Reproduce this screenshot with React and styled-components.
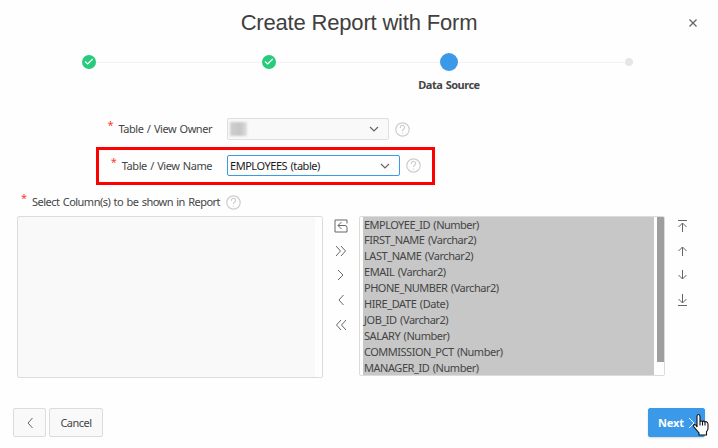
import React from "react";
import styled, { createGlobalStyle } from "styled-components";

const Global = createGlobalStyle`
  * { box-sizing: border-box; }
  body { margin: 0; background: #fefefe; }
  svg { display: block; flex: none; }
`;

const Dialog = styled.main`
  width: 718px;
  height: 448px;
  overflow: hidden;
  display: flex;
  flex-direction: column;
  background: #fefefe;
  color: #454545;
  font: 11px/16px "Noto Sans", "Open Sans", sans-serif;
  word-spacing: 1px;
`;

const Header = styled.header`
  height: 46px;
  flex: none;
  display: grid;
  grid-template-columns: 50px 1fr 50px;
  align-items: center;
`;

const Title = styled.h1`
  grid-column: 2;
  margin: 0;
  text-align: center;
  color: #404040;
  font: 400 22px/26px "Liberation Sans", Arial, sans-serif;
  letter-spacing: -0.18px;
  word-spacing: 0;
`;

const Close = styled.button`
  border: 0;
  padding: 0;
  background: none;
  justify-self: center;
`;

const Steps = styled.ol`
  list-style: none;
  margin: 0 -1px;
  padding: 0;
  height: 68px;
  flex: none;
  display: grid;
  grid-template-columns: repeat(4, 180px);
`;

const Step = styled.li`
  display: flex;
  flex-direction: column;
  align-items: center;
`;

const Track = styled.div`
  width: 180px;
  height: 32px;
  display: flex;
  align-items: center;
`;

const Line = styled.span`
  flex: 1;
  height: 1px;
  background: ${(p) => (p.$hidden ? "transparent" : "#f3f3f3")};
`;

const Dot = styled.span`
  width: ${(p) => p.$size}px;
  height: ${(p) => p.$size}px;
  border-radius: 50%;
  background: ${(p) => p.$color};
  display: grid;
  place-items: center;
`;

const StepLabel = styled.b`
  font-size: 11px;
  line-height: 14px;
  letter-spacing: -0.5px;
`;

const Field = styled.div`
  display: flex;
  align-items: center;
  flex: none;
  width: 339px;
  height: 38px;
  padding-bottom: ${(p) => (p.$highlight ? 1 : 0)}px;
  margin: ${(p) => p.$margin};
  border: 3px solid ${(p) => (p.$highlight ? "#fe0000" : "transparent")};
`;

const Label = styled.label`
  width: ${(p) => p.$width};
  display: flex;
  justify-content: flex-end;
  align-items: flex-start;
  gap: 5px;
  letter-spacing: ${(p) => p.$spacing || 0}px;
  white-space: nowrap;
`;

const Star = styled.span`
  color: #ff3b30;
  font-size: 11px;
  line-height: 8px;
  letter-spacing: 0;
`;

const Select = styled.div`
  width: ${(p) => p.$width}px;
  height: ${(p) => p.$height}px;
  margin: 0 6px 0 15px;
  padding: 0 6px 0 2px;
  flex: none;
  display: flex;
  align-items: center;
  justify-content: space-between;
  border: 1px solid ${(p) => (p.$focus ? "#3a99e8" : "#dfdfdf")};
  border-radius: 2px;
  background: ${(p) => (p.$focus ? "#fefefe" : "#f9f9f9")};
  color: #1c1c1c;
  line-height: 15px;
  letter-spacing: -0.46px;
`;

const Redacted = styled.span`
  width: 17px;
  height: 14px;
  background: linear-gradient(90deg, #d0d0d0, #c5c5c5 60%, #dedede);
  filter: blur(0.8px);
`;

const ShuttleLabel = styled.div`
  display: flex;
  align-items: center;
  gap: 6px;
  height: 18px;
  flex: none;
  margin: 8px 0 5px 21px;
`;

const Shuttle = styled.div`
  display: grid;
  grid-template-columns: 306px 36px 306px 34px;
  height: 162px;
  flex: none;
  margin-left: 17px;
`;

const EmptyList = styled.div`
  border: 1px solid #dcdcdc;
  border-radius: 2px;
  padding-right: 7px;
  background: #f9f9f9 content-box;
`;

const List = styled.div`
  height: 160px;
  border: 1px solid #dcdcdc;
  border-radius: 2px;
  padding-left: 3px;
  display: flex;
  justify-content: space-between;
  overflow: hidden;
`;

const Options = styled.ul`
  list-style: none;
  margin: 0;
  padding: 0 0 0 1px;
  width: 291px;
  background: #c7c7c7;
`;

const Option = styled.li`
  height: 16px;
  line-height: 16px;
  white-space: nowrap;
  letter-spacing: ${(p) => p.$spacing}px;
  &:first-child { height: 15px; }
`;

const Thumb = styled.div`
  width: 7px;
  height: 145px;
  background: #9e9e9e;
`;

const Controls = styled.div`
  display: flex;
  flex-direction: column;
  align-items: center;
  gap: 8.7px;
  padding-top: 2px;
`;

const Footer = styled.footer`
  display: flex;
  gap: 3px;
  margin: 30px 13px 0;
`;

const Button = styled.button`
  width: ${(p) => p.$width}px;
  height: 29px;
  padding: 0;
  display: flex;
  align-items: center;
  justify-content: center;
  border: 1px solid ${(p) => (p.$primary ? "#3a99e8" : "#dcdcdc")};
  border-radius: 2px;
  background: ${(p) => (p.$primary ? "#3a99e8" : "#f9f9f9")};
  color: ${(p) => (p.$primary ? "#fff" : "#454545")};
  font: inherit;
  font-weight: ${(p) => (p.$primary ? 700 : 400)};
  letter-spacing: ${(p) => (p.$primary ? -0.1 : -0.5)}px;
  box-shadow: ${(p) => (p.$primary ? "0 1px 2px #00000026" : "none")};
  margin-left: ${(p) => (p.$primary ? "auto" : 0)};
  padding-left: ${(p) => (p.$primary ? 5 : 0)}px;
  position: relative;
`;

const Cursor = styled.svg`
  position: absolute;
  left: 43px;
  top: 4px;
`;

const paths = {
  reset: "M14 5.500V2h-12v12h12V9.500q0-2-2-2H5M8.500 4l-3.500 3.500L8.500 11",
  allRight: "M3 3l4.500 5L3 13M8 3l4.500 5L8 13",
  right: "M5 3l5 5-5 5",
  left: "M10.500 3 6 8l4.500 5",
  allLeft: "M8 3 3.500 8 8 13M13 3 8.500 8l4.500 5",
  top: "M4 2.5h9M8.5 14V5M4.5 9l4-4 4 4",
  up: "M8.5 13V4M4.5 8l4-4 4 4",
  down: "M8.5 3v9M4.5 8l4 4 4-4",
  bottom: "M4 13.5h9M8.5 2v9M4.5 7l4 4 4-4",
  chevron: "M4 6l4 4 4-4",
  close: "M4.5 4.5l7 7M11.5 4.5l-7 7",
};

const Icon = ({ name, color = "#666", width = 1 }) => (
  <svg width="16" height="16" viewBox="0 0 16 16" fill="none" stroke={color} strokeWidth={width}>
    <path d={paths[name]} />
  </svg>
);

const Help = () => (
  <svg width="15" height="15" viewBox="0 0 15 15" fill="none" stroke="#cecece" strokeWidth="1.2">
    <circle cx="7.5" cy="7.5" r="6.7" />
    <path d="M5.4 6V5.4a2.1 2.1 0 1 1 3.3 1.7q-1.2.7-1.2 1.8M7.5 10.4v1.2" />
  </svg>
);

const Check = () => (
  <svg width="10" height="10" viewBox="0 0 10 10" fill="none" stroke="#fff" strokeWidth="1.2">
    <path d="M1 4.5 3.7 7 8.7 2" />
  </svg>
);

const columns = [
  ["EMPLOYEE_ID (Number)", -0.53],
  ["FIRST_NAME (Varchar2)", -0.43],
  ["LAST_NAME (Varchar2)", -0.43],
  ["EMAIL (Varchar2)", -0.46],
  ["PHONE_NUMBER (Varchar2)", -0.48],
  ["HIRE_DATE (Date)", -0.41],
  ["JOB_ID (Varchar2)", -0.45],
  ["SALARY (Number)", -0.46],
  ["COMMISSION_PCT (Number)", -0.49],
  ["MANAGER_ID (Number)", -0.45],
];

const steps = [
  { size: 14, color: "#26cb7c", done: true },
  { size: 14, color: "#26cb7c", done: true },
  { size: 18, color: "#3a99e8", label: "Data Source" },
  { size: 8, color: "#e6e6e6" },
];

export default function App() {
  return (
    <Dialog>
      <Global />
      <Header>
        <Title>Create Report with Form</Title>
        <Close aria-label="Close"><Icon name="close" width={1.3} /></Close>
      </Header>
      <Steps>
        {steps.map((s, i) => (
          <Step key={i}>
            <Track>
              <Line $hidden={i === 0} />
              <Dot $size={s.size} $color={s.color}>{s.done && <Check />}</Dot>
              <Line $hidden={i === steps.length - 1} />
            </Track>
            {s.label && <StepLabel>{s.label}</StepLabel>}
          </Step>
        ))}
      </Steps>
      <Field $margin="-4px 0 0 96px">
        <Label $width="113px" $spacing={-0.46}><Star>*</Star>Table / View Owner</Label>
        <Select $width={162} $height={22}><Redacted /><Icon name="chevron" width={1.2} /></Select>
        <Help />
      </Field>
      <Field $margin="-1px 0 0 96px" $highlight>
        <Label $width="113px" $spacing={-0.46}><Star>*</Star>Table / View Name</Label>
        <Select $width={173} $height={21} $focus>EMPLOYEES (table)<Icon name="chevron" width={1.2} /></Select>
        <Help />
      </Field>
      <ShuttleLabel>
        <Label $width="auto" $spacing={-0.53}><Star>*</Star>Select Column(s) to be shown in Report</Label>
        <Help />
      </ShuttleLabel>
      <Shuttle>
        <EmptyList />
        <Controls>
          <Icon name="reset" />
          <Icon name="allRight" />
          <Icon name="right" />
          <Icon name="left" />
          <Icon name="allLeft" />
        </Controls>
        <List>
          <Options>
            {columns.map(([name, spacing]) => <Option key={name} $spacing={spacing}>{name}</Option>)}
          </Options>
          <Thumb />
        </List>
        <Controls>
          <Icon name="top" />
          <Icon name="up" />
          <Icon name="down" />
          <Icon name="bottom" />
        </Controls>
      </Shuttle>
      <Footer>
        <Button $width={33} aria-label="Back"><Icon name="left" /></Button>
        <Button $width={54}>Cancel</Button>
        <Button $width={57} $primary>
          Next<Icon name="right" color="#fff" />
          <Cursor width="18" height="24" viewBox="0 0 18 24" fill="#fff" stroke="#111" strokeWidth="1.1">
            <path d="M5 14V3.500q0-2 1.500-2T8 3.500v5q1-1 2.500 0 1-1 2.500.5 1-.8 2 .2 1 .5 1 2v4q0 2-1.500 3.500V22H7v-2L2 14q-1-2 .5-2.500Q4 11.500 5 14zM8 8.500v4M10.500 8.500v4M13 9v3.500" />
          </Cursor>
        </Button>
      </Footer>
    </Dialog>
  );
}
